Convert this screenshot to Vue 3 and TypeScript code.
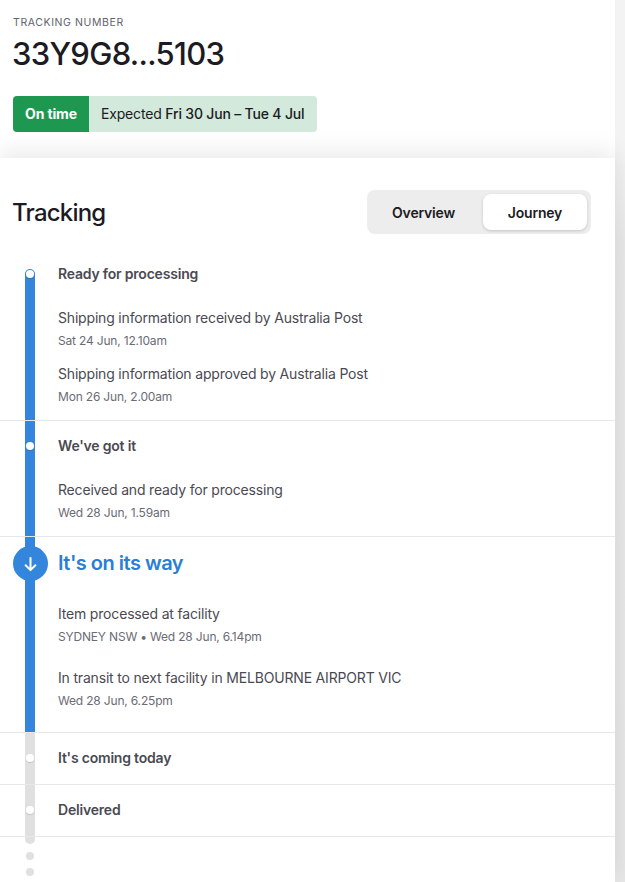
<template>
  <div class="page">
    <main class="content">
      <header class="summary">
        <span class="kicker">TRACKING NUMBER</span>
        <h1>33Y9G8...5103</h1>
        <div class="eta">
          <strong class="eta-flag">On time</strong>
          <span class="eta-text">Expected <b>Fri 30 Jun – Tue 4 Jul</b></span>
        </div>
      </header>

      <section class="tracking">
        <div class="tracking-head">
          <h2>Tracking</h2>
          <div class="tabs">
            <button type="button" class="tab">Overview</button>
            <button type="button" class="tab active">Journey</button>
          </div>
        </div>

        <div class="timeline">
          <div class="rail rail-done"></div>
          <div class="rail rail-todo"></div>
          <span class="rail-dot first"></span>
          <span class="rail-dot second"></span>

          <div
            v-for="stage in stages"
            :key="stage.title"
            class="stage"
            :class="{ current: stage.current, last: stage.events.length === 0 }"
          >
            <div class="stage-title">
              <span v-if="stage.current" class="marker">
                <svg width="16" height="16" viewBox="0 0 16 16" fill="none">
                  <path d="M7.5 2V14M2.6 9.2L7.5 14.1L12.4 9.2" stroke="#fff" stroke-width="2" stroke-linecap="round" stroke-linejoin="round" />
                </svg>
              </span>
              <span v-else class="dot"></span>
              <h3>{{ stage.title }}</h3>
            </div>
            <ul v-if="stage.events.length" class="events">
              <li v-for="event in stage.events" :key="event.text">
                <p>{{ event.text }}</p>
                <small>{{ event.date }}</small>
              </li>
            </ul>
          </div>
        </div>
      </section>
    </main>
    <div class="scrollbar"></div>
  </div>
</template>

<script setup lang="ts">
interface TrackingEvent {
  text: string
  date: string
}

interface Stage {
  title: string
  current?: boolean
  events: TrackingEvent[]
}

const stages: Stage[] = [
  {
    title: 'Ready for processing',
    events: [
      { text: 'Shipping information received by Australia Post', date: 'Sat 24 Jun, 12.10am' },
      { text: 'Shipping information approved by Australia Post', date: 'Mon 26 Jun, 2.00am' }
    ]
  },
  {
    title: "We've got it",
    events: [{ text: 'Received and ready for processing', date: 'Wed 28 Jun, 1.59am' }]
  },
  {
    title: "It's on its way",
    current: true,
    events: [
      { text: 'Item processed at facility', date: 'SYDNEY NSW • Wed 28 Jun, 6.14pm' },
      { text: 'In transit to next facility in MELBOURNE AIRPORT VIC', date: 'Wed 28 Jun, 6.25pm' }
    ]
  },
  { title: "It's coming today", events: [] },
  { title: 'Delivered', events: [] }
]
</script>

<style>
html,
body {
  margin: 0;
  background: #fff;
  overflow: hidden;
}
</style>

<style scoped>
.page {
  height: 882px;
  display: flex;
  overflow: hidden;
  font-family: Inter, 'Liberation Sans', sans-serif;
  color: #1c1b23;
}

.content {
  width: 615px;
}

.scrollbar {
  width: 10px;
  background: linear-gradient(#f3f3f3 0, #f3f3f3 150px, #e8e8e8 240px, #e6e6e6 100%);
}

.summary {
  height: 158px;
  padding: 16px 12px 0 13px;
  box-sizing: border-box;
}

.kicker {
  display: block;
  color: #63636e;
  font-size: 10.5px;
  line-height: 14px;
  letter-spacing: 0.6px;
}

h1 {
  margin: 4px 0 0 -1px;
  font-size: 31px;
  line-height: 40px;
  font-weight: 500;
  letter-spacing: -0.7px;
}

.eta {
  width: 304px;
  height: 36px;
  margin-top: 22px;
  display: flex;
  border-radius: 4px;
  overflow: hidden;
  font-size: 14px;
  line-height: 36px;
}

.eta-flag {
  width: 76px;
  text-align: center;
  background: #1e9850;
  color: #fff;
  font-weight: 700;
  letter-spacing: -0.15px;
}

.eta-text {
  flex: 1;
  padding-left: 12px;
  background: #d2e9dc;
  letter-spacing: -0.18px;
}

.eta-text b {
  font-weight: 500;
}

.tracking {
  position: relative;
  height: 724px;
  background: #fff;
  box-shadow: 0 -6px 22px rgba(0, 0, 0, 0.09);
}

.tracking-head {
  height: 91px;
  padding: 32px 24px 0 12px;
  box-sizing: border-box;
  display: flex;
  justify-content: space-between;
  align-items: flex-start;
}

h2 {
  margin: 0;
  font-size: 24px;
  line-height: 46px;
  font-weight: 500;
  letter-spacing: -0.8px;
}

.tabs {
  width: 224px;
  height: 44px;
  padding: 4px;
  box-sizing: border-box;
  display: flex;
  gap: 4px;
  border-radius: 8px;
  background: #ededed;
}

.tab {
  flex: 1;
  border: 0;
  padding: 0 3px 0 0;
  border-radius: 8px;
  background: transparent;
  color: #1c1b23;
  font: 600 14px Inter, 'Liberation Sans', sans-serif;
  letter-spacing: -0.2px;
}

.tab.active {
  flex: 0 0 104px;
  padding: 0;
  background: #fff;
  box-shadow: 0 1px 3px rgba(0, 0, 0, 0.18);
}

.timeline {
  position: relative;
}

.rail {
  position: absolute;
  left: 25px;
  width: 10px;
}

.rail-done {
  top: 20px;
  height: 464px;
  background: #3486dd;
  border-radius: 5px 5px 0 0;
}

.rail-todo {
  top: 484px;
  height: 111px;
  background: #e0e0e0;
  border-radius: 0 0 5px 5px;
}

.rail-dot {
  position: absolute;
  left: 26px;
  width: 8px;
  height: 8px;
  border-radius: 50%;
  background: #e0e0e0;
}

.rail-dot.first {
  top: 603px;
}

.rail-dot.second {
  top: 619px;
}

.stage {
  position: relative;
  padding-bottom: 14px;
  border-bottom: 1px solid #e8e8e8;
}

.stage.last {
  padding-bottom: 0;
}

.stage.current {
  padding-bottom: 22px;
}

.stage-title {
  height: 51px;
  display: flex;
  align-items: center;
  padding-left: 58px;
}

h3 {
  margin: 0 0 2px;
  color: #4b4a52;
  font-size: 14px;
  font-weight: 600;
  letter-spacing: -0.2px;
}

.dot {
  position: absolute;
  left: 26px;
  top: 21px;
  width: 8px;
  height: 8px;
  border-radius: 50%;
  background: #fff;
  box-shadow: 0 1px 1px rgba(0, 0, 0, 0.12);
}

.stage.current .stage-title {
  height: 52px;
}

.stage.current h3 {
  margin: 0;
  color: #2a7ed6;
  font-size: 20px;
  font-weight: 600;
  letter-spacing: -0.5px;
}

.marker {
  position: absolute;
  left: 13px;
  top: 9px;
  width: 35px;
  height: 35px;
  display: flex;
  align-items: center;
  justify-content: center;
  border-radius: 50%;
  background: #3486dd;
}

.events {
  list-style: none;
  margin: 0;
  padding: 6px 0 0 58px;
  display: flex;
  flex-direction: column;
  gap: 12px;
}

.stage.current .events {
  padding-top: 13px;
  gap: 20px;
}

.events p {
  margin: 0 0 1px;
  color: #4b4a52;
  font-size: 14px;
  line-height: 24px;
  letter-spacing: -0.18px;
}

.events small {
  display: block;
  color: #6b6b75;
  font-size: 12px;
  line-height: 19px;
  letter-spacing: -0.18px;
}
</style>
